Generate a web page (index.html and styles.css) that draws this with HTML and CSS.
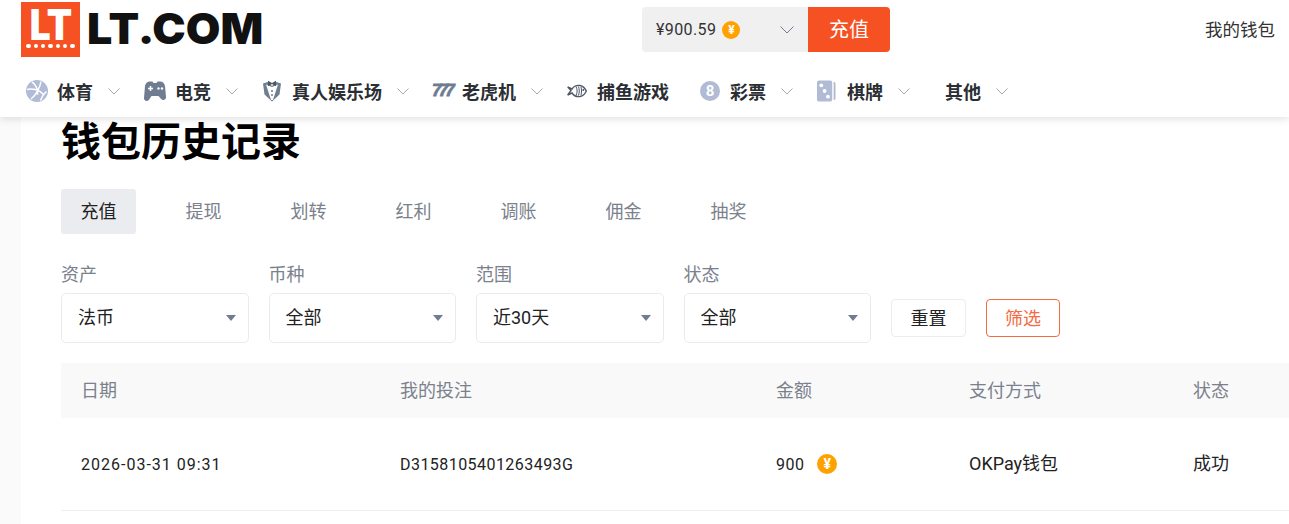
FILE: index.html
```html
<!DOCTYPE html>
<html lang="zh-CN">
<head>
    <meta charset="UTF-8">
    <meta name="viewport" content="width=device-width, initial-scale=1.0">
    <title>钱包历史记录</title>
    <link rel="stylesheet" href="styles.css">
</head>
<body>

    <header class="header">
        <div class="top-bar">
            <a class="logo" href="#">
                <span class="logo-mark">
                    <span class="logo-mark-text">LT</span>
                    <span class="logo-dots"><i></i><i></i><i></i><i></i><i></i><i></i><i></i></span>
                </span>
                <span class="logo-text">LT.COM</span>
            </a>

            <div class="wallet">
                <div class="wallet-balance">
                    <span class="wallet-amount">¥900.59</span>
                    <span class="coin">¥</span>
                    <svg class="wallet-arrow" viewBox="0 0 14 8"><path d="M.5.5 7 7 13.5.5"/></svg>
                </div>
                <a class="wallet-deposit" href="#">充值</a>
            </div>

            <a class="my-wallet" href="#">我的钱包</a>
        </div>

        <!-- 主导航 -->
        <nav class="nav">
            <a class="nav-item" href="#">
                <svg class="nav-icon" viewBox="0 0 22 22">
                    <circle cx="11" cy="11" r="11" fill="#b1bbd6"/>
                    <path d="M6 1.800c4 3 6 8 5.500 13M1 9.500c5-1.500 12 0 16.500 5M15 1.500c-1 6-5 14-10 17.500M14.500 20.500c1.500-4 3.500-7 6-9" fill="none" stroke="#fff" stroke-width="1.500"/>
                </svg>
                <span>体育</span>
                <svg class="nav-arrow" viewBox="0 0 12 7"><path d="M.5.5 6 6 11.500.5"/></svg>
            </a>
            <a class="nav-item" href="#">
                <svg class="nav-icon" viewBox="0 0 22 22">
                    <path d="M6 1.500h2.500l1 1.500h3l1-1.500H16c2.800 0 4.500 2 5 4.500l1 11c.2 2.800-3 4-4.800 2L14.500 16h-7l-2.700 4c-1.800 2-5 .8-4.800-2L1 6c.5-2.500 2.200-4.500 5-4.500z" fill="#6f7c92"/>
                    <path d="M4 8.500h5M6.500 6v5" stroke="#fff" stroke-width="1.500"/>
                    <circle cx="14.500" cy="8.500" r="1.200" fill="#fff"/><circle cx="18" cy="8.500" r="1.200" fill="#fff"/>
                </svg>
                <span>电竞</span>
                <svg class="nav-arrow" viewBox="0 0 12 7"><path d="M.5.5 6 6 11.500.5"/></svg>
            </a>
            <a class="nav-item nav-item-tux" href="#">
                <svg class="nav-icon nav-icon-tux" viewBox="0 0 20 22">
                    <path d="M1 3.500 6 2l4 4 4-4 5 1.500-1.500 11L10 21.500l-7.500-7z" fill="#6f7c92"/>
                    <path d="M4 4.500 10 7l6-2.500L11 20H9z" fill="#fff"/>
                    <path d="M6 .8 10 3l4-2.200v5.400L10 4 6 6.200z" fill="#4f5868"/>
                    <circle cx="10" cy="11" r="1" fill="#6f7c92"/><circle cx="10" cy="15" r="1" fill="#6f7c92"/>
                </svg>
                <span>真人娱乐场</span>
                <svg class="nav-arrow" viewBox="0 0 12 7"><path d="M.5.5 6 6 11.500.5"/></svg>
            </a>
            <a class="nav-item" href="#">
                <span class="nav-icon slot-icon">777</span>
                <span>老虎机</span>
                <svg class="nav-arrow" viewBox="0 0 12 7"><path d="M.5.5 6 6 11.500.5"/></svg>
            </a>
            <a class="nav-item nav-item-plain" href="#">
                <svg class="nav-icon nav-icon-fish" viewBox="0 0 20 14">
                    <path d="M.7 3 4 6.500.7 11 5 9c2 3 5 4 8 3.500 2.500-.5 5-2.500 6.300-5.500C18 4 15.500 2 13 1.500 10 1 7 2 5 5z" fill="none" stroke="#4f5868" stroke-width="1.400"/>
                    <path d="M9 2.500c1.500 3 1.500 6 0 9M11.500 2.500c1 3 1 6 0 9M14 3c.7 2.500.7 5.500 0 8" fill="none" stroke="#4f5868" stroke-width="1"/>
                    <circle cx="16.300" cy="6" r="1" fill="#4f5868"/>
                </svg>
                <span>捕鱼游戏</span>
            </a>
            <a class="nav-item" href="#">
                <span class="nav-icon ball-icon">8</span>
                <span>彩票</span>
                <svg class="nav-arrow" viewBox="0 0 12 7"><path d="M.5.5 6 6 11.500.5"/></svg>
            </a>
            <a class="nav-item nav-item-tile" href="#">
                <svg class="nav-icon nav-icon-tile" viewBox="0 0 20 22">
                    <rect x="0" y="0" width="16" height="22" rx="2" fill="#b1bbd6"/>
                    <path d="M17.500 1.500c1.300 0 2 .7 2 2v15c0 1.300-.7 2-2 2z" fill="#b1bbd6"/>
                    <circle cx="4.500" cy="5" r="2" fill="#fff"/>
                    <circle cx="8" cy="11" r="2" fill="#fff"/>
                    <circle cx="11.500" cy="17" r="2" fill="#fff"/>
                </svg>
                <span>棋牌</span>
                <svg class="nav-arrow" viewBox="0 0 12 7"><path d="M.5.5 6 6 11.500.5"/></svg>
            </a>
            <a class="nav-item" href="#">
                <span>其他</span>
                <svg class="nav-arrow" viewBox="0 0 12 7"><path d="M.5.5 6 6 11.500.5"/></svg>
            </a>
        </nav>
    </header>

    <main class="content">
        <h1 class="page-title">钱包历史记录</h1>

        <div class="tabs">
            <a class="tab tab-active" href="#">充值</a>
            <a class="tab" href="#">提现</a>
            <a class="tab" href="#">划转</a>
            <a class="tab" href="#">红利</a>
            <a class="tab" href="#">调账</a>
            <a class="tab" href="#">佣金</a>
            <a class="tab" href="#">抽奖</a>
        </div>

        <div class="filters">
            <div class="filter">
                <label class="filter-label">资产</label>
                <div class="select">法币</div>
            </div>
            <div class="filter">
                <label class="filter-label">币种</label>
                <div class="select">全部</div>
            </div>
            <div class="filter">
                <label class="filter-label">范围</label>
                <div class="select">近30天</div>
            </div>
            <div class="filter">
                <label class="filter-label">状态</label>
                <div class="select">全部</div>
            </div>
            <button class="btn">重置</button>
            <button class="btn btn-primary">筛选</button>
        </div>

        <!-- 记录表格 -->
        <div class="table">
            <div class="table-row table-head">
                <div>日期</div>
                <div>我的投注</div>
                <div>金额</div>
                <div>支付方式</div>
                <div>状态</div>
            </div>
            <div class="table-row table-body">
                <div class="num num-date">2026-03-31 09:31</div>
                <div class="num">D3158105401263493G</div>
                <div class="amount"><span class="num">900</span><span class="coin coin-lg">¥</span></div>
                <div class="cell-text">OKPay钱包</div>
                <div class="cell-text">成功</div>
            </div>
        </div>
    </main>

</body>
</html>
```

FILE: styles.css
```css
/* 页面 */
html, body {
    height: 100%;
}

body {
    margin: 0;
    overflow: hidden;
    background-color: #fafafa;
    color: #222;
    font-family: Roboto, "Noto Sans CJK SC", sans-serif;
    font-size: 18px;
}

a {
    color: inherit;
    text-decoration: none;
}

/* 顶部 */
.header {
    position: relative;
    z-index: 2;
    height: 117px;
    background-color: #fff;
    box-shadow: 0 2px 8px rgba(0, 0, 0, 0.12);
}

.top-bar {
    display: flex;
    align-items: flex-start;
    height: 73px;
    padding: 0 14px 0 21px;
}

.logo {
    display: flex;
    align-items: center;
    width: 621px;
    height: 57px;
}

.logo-mark {
    display: flex;
    flex-direction: column;
    align-items: center;
    width: 59px;
    height: 55px;
    margin-top: 1px;
    background-color: #f55123;
    color: #fff;
}

.logo-mark-text {
    margin-top: 6px;
    font-family: Inter, sans-serif;
    font-size: 42px;
    font-weight: 900;
    line-height: 34px;
    letter-spacing: -1px;
    transform: scaleX(0.88);
}

.logo-dots {
    display: flex;
    gap: 2.800px;
    margin-top: 2px;
}

.logo-dots i {
    width: 4.500px;
    height: 4.500px;
    border-radius: 50%;
    background-color: #fff;
}

.logo-text {
    margin-left: 7px;
    font-family: Inter, sans-serif;
    font-size: 42px;
    font-weight: 900;
    color: #111;
    transform: scaleX(1.065);
    transform-origin: left center;
}

.wallet {
    display: flex;
    width: 248px;
    height: 45px;
    margin-top: 7px;
    border-radius: 4px;
    overflow: hidden;
}

.wallet-balance {
    display: flex;
    align-items: center;
    width: 166px;
    padding-left: 14px;
    box-sizing: border-box;
    background-color: #f0f0f0;
}

.wallet-amount {
    font-size: 16px;
    color: #333;
    letter-spacing: 0.4px;
}

.coin {
    display: flex;
    align-items: center;
    justify-content: center;
    width: 18px;
    height: 18px;
    margin-left: 6px;
    border-radius: 50%;
    background-color: #ffa200;
    color: #fff;
    font-size: 12px;
    font-weight: 700;
}

.coin-lg {
    width: 20px;
    height: 20px;
    margin-left: 13px;
    font-size: 14px;
}

.wallet-arrow {
    width: 14px;
    height: 8px;
    margin-left: 40px;
    fill: none;
    stroke: #6f7c92;
    stroke-width: 1;
}

.wallet-deposit {
    flex: 1;
    padding-top: 1px;
    background-color: #f55123;
    color: #fff;
    font-size: 20px;
    line-height: 45px;
    text-align: center;
}

.my-wallet {
    margin-left: auto;
    margin-top: 17px;
    color: #333;
    font-size: 17.500px;
    line-height: 26px;
}

/* 导航 */
.nav {
    display: flex;
    align-items: center;
    height: 36px;
    padding-left: 26px;
}

.nav-item {
    display: flex;
    align-items: center;
    margin-right: 24.500px;
    font-weight: 700;
    color: #2b2e33;
}

.nav-item-tux {
    margin-right: 23.500px;
}

.nav-item-plain {
    margin-right: 31px;
}

.nav-item-tile {
    margin-right: 35.500px;
}

.nav-icon {
    flex: none;
    width: 22px;
    height: 22px;
    margin-right: 9px;
}

.nav-icon-tux {
    width: 20px;
    margin-right: 10px;
}

.nav-icon-fish {
    width: 20px;
    height: 14px;
    margin-right: 10px;
}

.nav-icon-tile {
    width: 19px;
    margin-right: 11px;
}

.slot-icon {
    margin-right: 8px;
    font-family: "Liberation Sans", sans-serif;
    font-size: 17px;
    font-style: italic;
    font-weight: 700;
    line-height: 22px;
    letter-spacing: -2.800px;
    color: #6f7c92;
    -webkit-text-stroke: 0.8px #6f7c92;
}

.ball-icon {
    width: 20px;
    height: 20px;
    margin-right: 10px;
    border-radius: 50%;
    background-color: #b1bbd6;
    color: #fff;
    font-size: 15px;
    line-height: 20px;
    text-align: center;
}

.nav-arrow {
    width: 12px;
    height: 7px;
    margin-left: 14.500px;
    fill: none;
    stroke: #a3a9b5;
    stroke-width: 1;
}

/* 内容 */
.content {
    height: 407px;
    margin-left: 21px;
    padding-left: 40px;
    background-color: #fff;
}

.page-title {
    margin: 0;
    font-size: 40px;
    font-weight: 700;
    line-height: 52px;
    color: #000;
}

.tabs {
    display: flex;
    gap: 30px;
    margin-top: 20px;
}

.tab {
    width: 75px;
    height: 45px;
    border-radius: 3px;
    color: #7b818c;
    line-height: 45px;
    text-align: center;
}

.tab-active {
    background-color: #ebecf0;
    color: #222;
}

.filters {
    display: flex;
    align-items: flex-end;
    gap: 20px;
    margin-top: 27px;
}

.filter {
    width: 187.500px;
}

.filter-label {
    display: block;
    margin-bottom: 5px;
    padding-top: 1px;
    color: #7b818c;
    line-height: 26px;
}

.select {
    position: relative;
    height: 48px;
    padding-left: 16px;
    border: 1px solid #ebebeb;
    border-radius: 5px;
    line-height: 48px;
}

/* 下拉三角 */
.select::after {
    content: "";
    position: absolute;
    top: 21px;
    right: 12px;
    border-top: 6px solid #6f7c92;
    border-left: 5px solid transparent;
    border-right: 5px solid transparent;
}

.btn {
    width: 75px;
    height: 38px;
    margin-bottom: 6px;
    padding: 0 0 3px;
    border: 1px solid #ececec;
    border-radius: 4px;
    background-color: #fff;
    color: #222;
    font-family: inherit;
    font-size: 18px;
}

.btn-primary {
    width: 74px;
    border-color: #f46a42;
    color: #f46a42;
}

/* 表格 */
.table {
    margin-top: 20px;
}

.table-row {
    display: grid;
    grid-template-columns: 319px 376px 193px 224px 1fr;
    align-items: center;
}

.table-row > div {
    padding-left: 20px;
}

.table-head {
    height: 55px;
    background-color: #f9f9f9;
    color: #7b818c;
}

.table-head > div {
    padding-bottom: 3px;
}

.table-body {
    height: 92px;
    border-bottom: 1px solid #eee;
}

.table-body > .cell-text {
    padding-bottom: 5px;
}

.num {
    font-size: 16px;
    letter-spacing: 0.450px;
}

.num-date {
    letter-spacing: 1px;
}

.amount {
    display: flex;
    align-items: center;
}
```
